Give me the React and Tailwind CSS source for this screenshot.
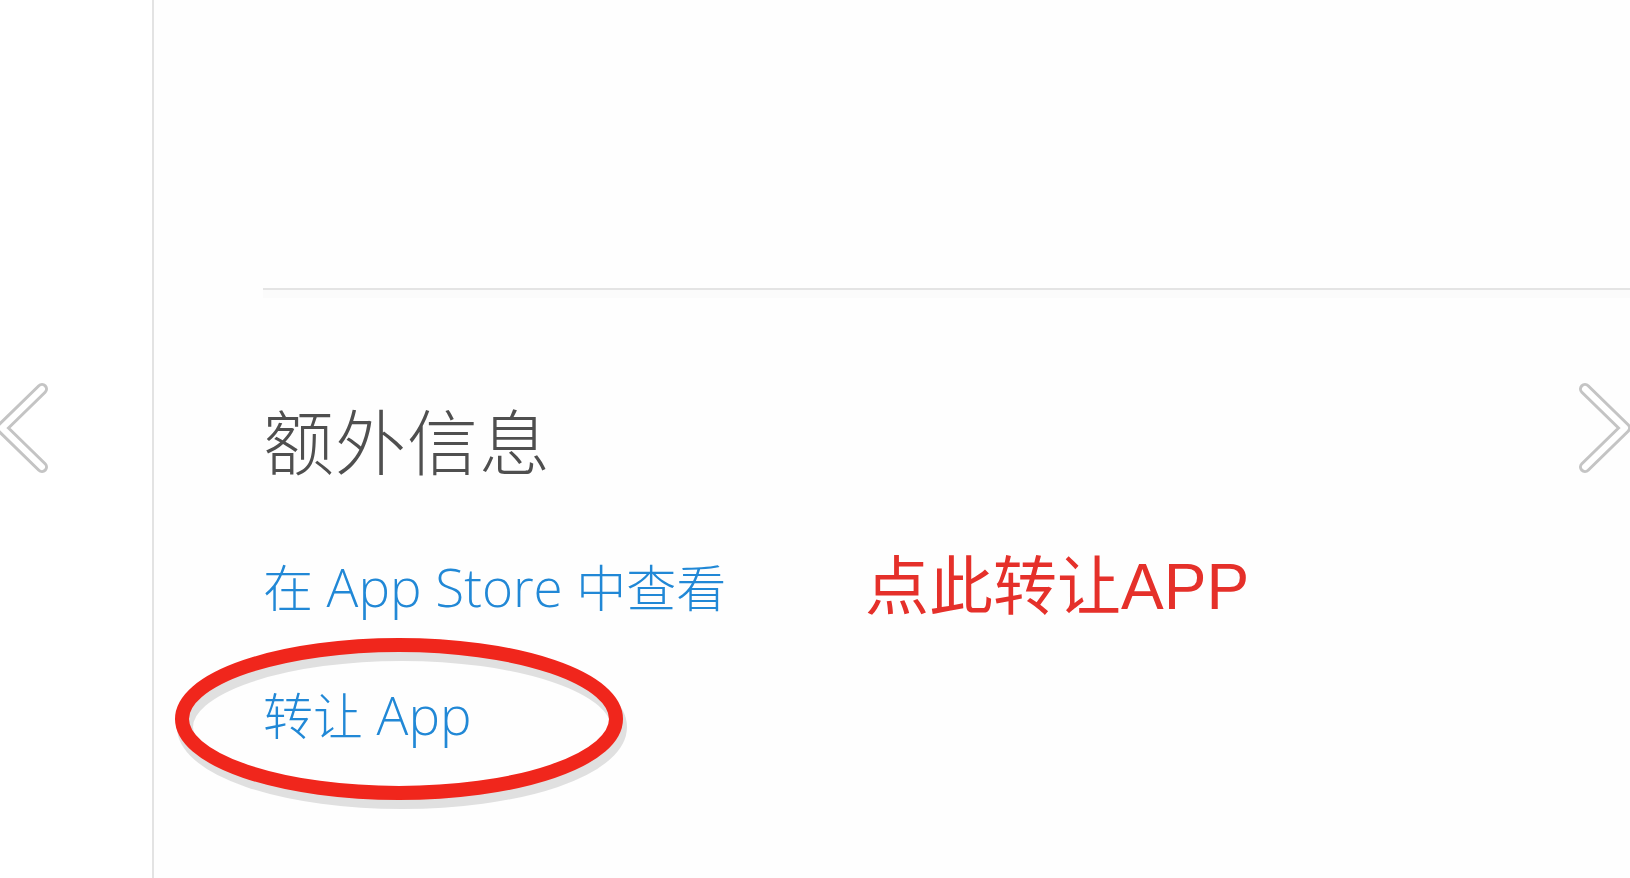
import React from 'react';

const cjk = { fontFamily: '"Helvetica Neue", Lato, "Noto Sans CJK SC", sans-serif' };
const latinLight = { fontFamily: '"Open Sans", "Liberation Sans", sans-serif' };
const latin = { fontFamily: '"Liberation Sans", Arial, sans-serif' };

const Chevron = ({ dir }) => {
  const d = dir === 'left' ? 'M48 7 L8 46 L48 85' : 'M8 7 L48 46 L8 85';
  return (
    <svg width="56" height="92" viewBox="0 0 56 92" fill="none">
      <path d={d} stroke="#c4c4c4" strokeWidth="12" strokeLinecap="round" strokeLinejoin="round" />
      <path d={d} stroke="#ffffff" strokeWidth="6" strokeLinecap="round" strokeLinejoin="round" />
    </svg>
  );
};

const App = () => {
  return (
    <div className="w-full h-[878px] flex bg-white overflow-hidden relative" style={cjk}>
      <div className="w-[152px] shrink-0 relative">
        <div className="absolute left-[-6px] top-[382px]">
          <Chevron dir="left" />
        </div>
      </div>

      <div className="w-[2px] bg-[#e3e3e3]"></div>

      <div className="flex-1 pl-[109px] bg-[#fefefe]">
        <div className="h-[288px]"></div>
        <div className="h-[2px] bg-[#e4e4e4]"></div>
        <div className="h-[8px] bg-[#fbfbfb]"></div>

        <h2 className="mt-[108px] text-[71px] leading-none font-light text-[#4f4f4f] tracking-[1px]">额外信息</h2>

        <div className="mt-[76px] flex items-center">
          <a className="w-[602px] shrink-0 text-[50px] leading-none font-light text-[#2188d6] whitespace-nowrap">
            在 <span style={latinLight} className="text-[53px] font-light">App Store</span> 中查看
          </a>
          <span className="text-[64px] leading-none font-normal text-[#e5302a] whitespace-nowrap">
            点此转让<span style={latin}>APP</span>
          </span>
        </div>

        <div className="mt-[69px] relative inline-block">
          <a className="text-[50px] leading-none font-light text-[#2188d6] whitespace-nowrap">
            转让 <span style={latinLight} className="text-[53px] font-light">App</span>
          </a>
          <svg
            className="absolute left-[-92px] top-[-55px]"
            width="470"
            height="180"
            viewBox="0 0 470 180"
            fill="none"
          >
            <ellipse cx="228" cy="89" rx="217" ry="74" stroke="#9a9a9a" strokeOpacity="0.3" strokeWidth="16" transform="translate(3 5)" />
            <ellipse cx="228" cy="86" rx="217" ry="74" stroke="#f0261c" strokeWidth="14" />
          </svg>
        </div>
      </div>

      <div className="absolute right-[-3px] top-[382px]">
        <Chevron dir="right" />
      </div>
    </div>
  );
};

export default App;
